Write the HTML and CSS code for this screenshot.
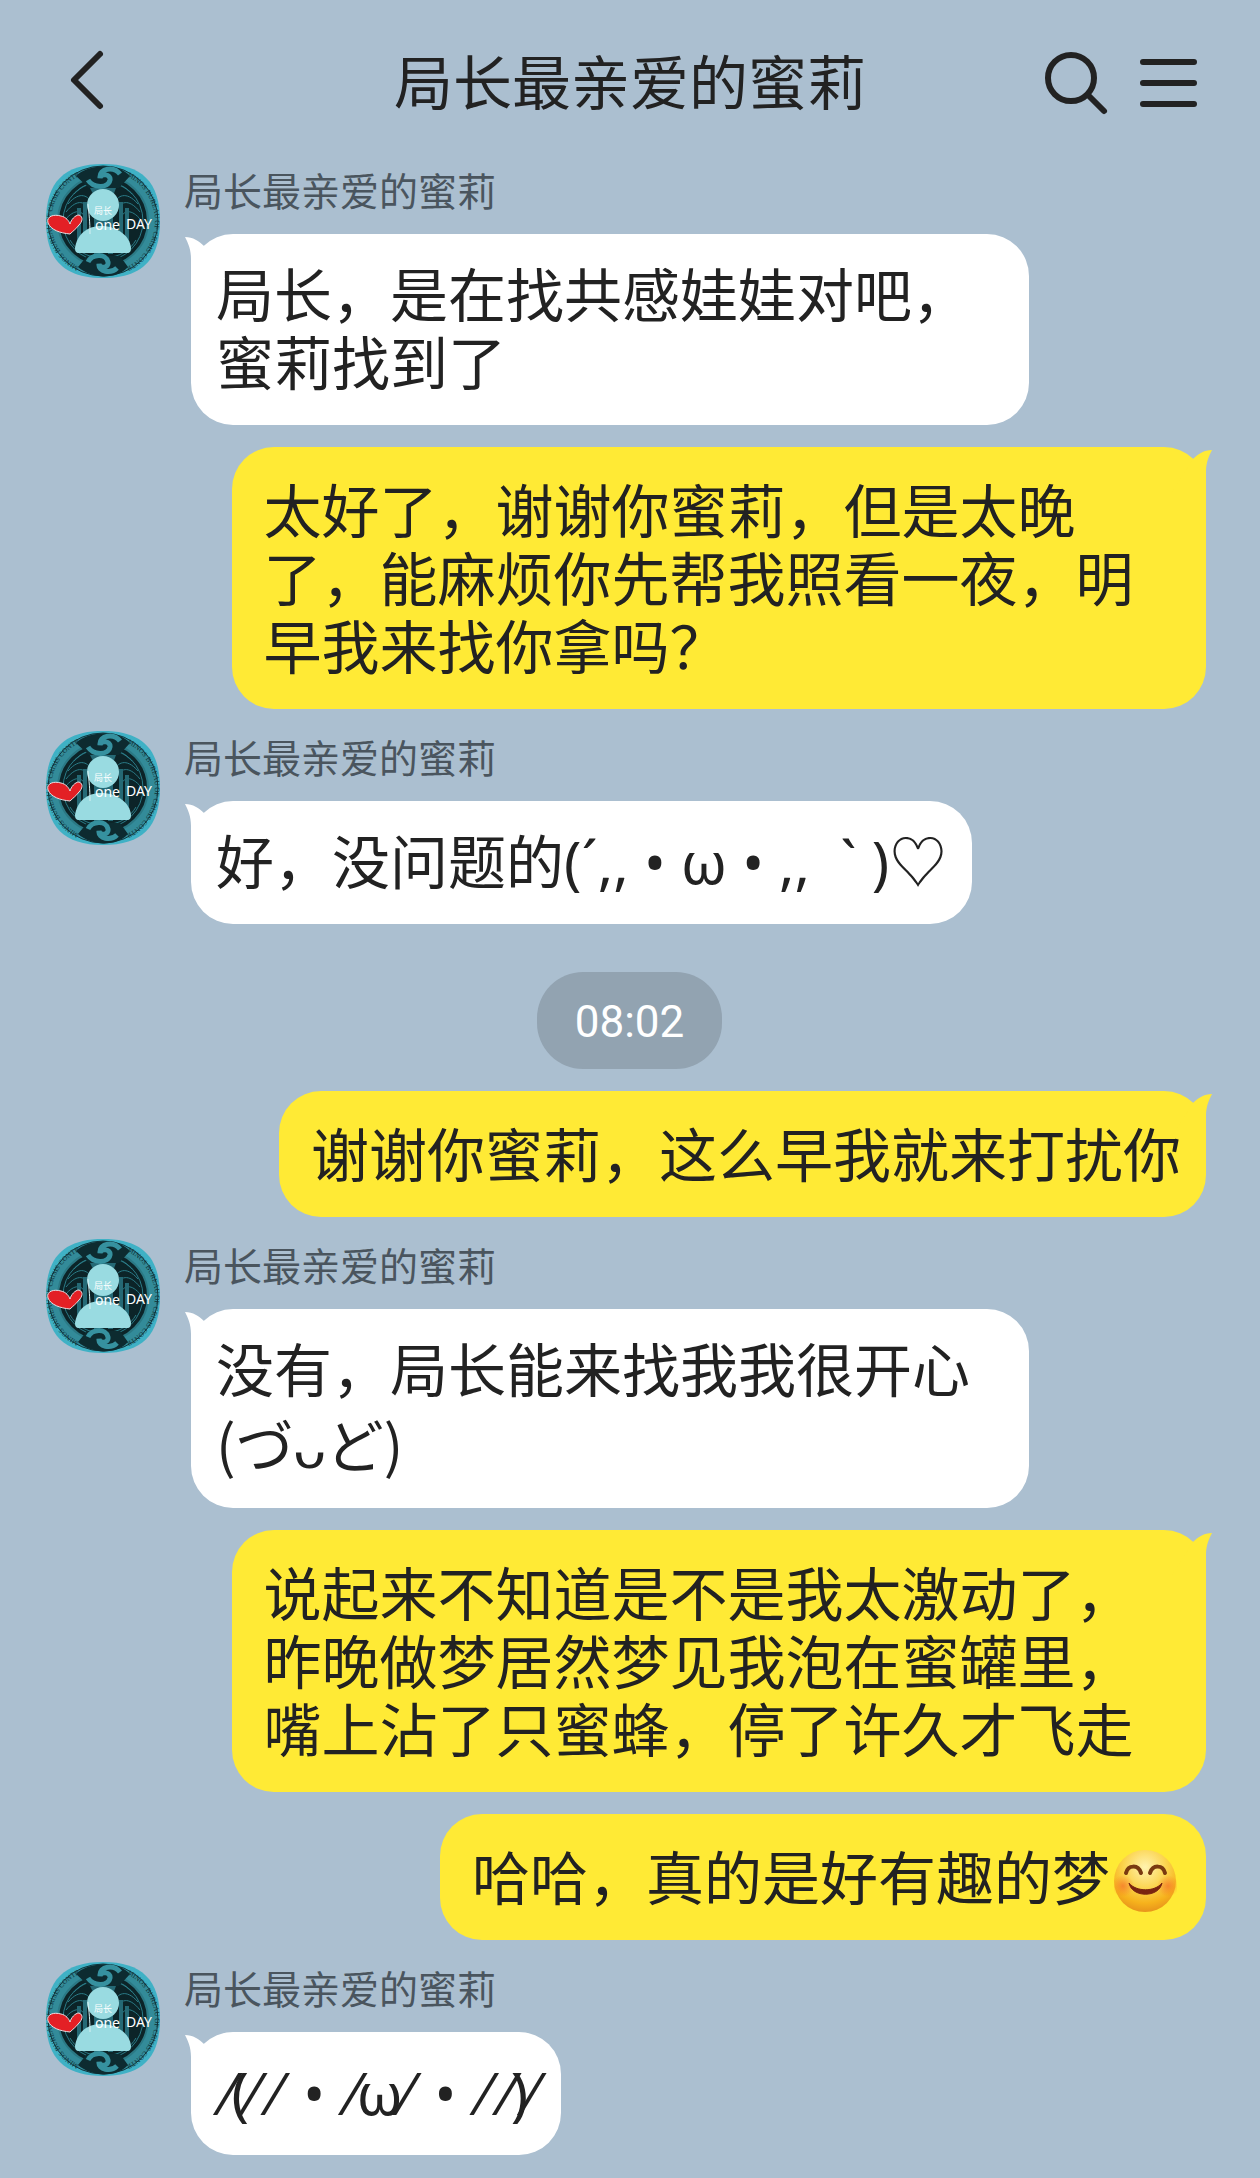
FILE: index.html
```html
<!DOCTYPE html>
<html lang="zh-CN">
<head>
  <meta charset="UTF-8">
  <meta name="viewport" content="width=device-width, initial-scale=1.0">
  <title>局长最亲爱的蜜莉</title>
  <link rel="stylesheet" href="styles.css">
</head>
<body>
  <!-- shared shapes -->
  <svg class="defs" width="0" height="0" aria-hidden="true">
    <defs>
      <symbol id="tail" viewBox="0 0 42 42">
        <path d="M0 0C8 0 14 4 19 9L40 42H6V22C6 12 3 6 0 0Z" fill="currentColor"/>
      </symbol>
      <clipPath id="avatar-clip">
        <path d="M57 0C96 0 114 18 114 57S96 114 57 114 0 96 0 57 18 0 57 0Z"/>
      </clipPath>
      <path id="ring-left" d="M33 103A51 51 0 0 1 33 12"/>
      <path id="ring-right" d="M81 12A51 51 0 0 1 81 103"/>
      <symbol id="avatar" viewBox="0 0 114 114">
        <g clip-path="url(#avatar-clip)">
          <rect width="114" height="114" fill="#3fb1c5"/>
          <circle cx="57" cy="57" r="55" fill="#338b99" stroke="#12343b" stroke-width="1"/>
          <circle cx="57" cy="57" r="45" fill="#0c2428" stroke="#2b7985" stroke-width="2"/>
          <g fill="none" stroke="#2b7c88" stroke-width="1">
            <circle cx="57" cy="57" r="40"/>
            <path d="M22 40C34 26 43 32 46 40M20 48c12-15 20-9 23-3M19 56c10-12 17-9 20-3M92 40C80 26 71 32 68 40M94 48c-12-15-20-9-23-3M95 56c-10-12-17-9-20-3"/>
            <path d="M24 76c6 10 14 15 24 17M90 76c-6 10-14 15-24 17M28 30c8-8 14-10 20-10M86 30c-8-8-14-10-20-10"/>
          </g>
          <path d="M44 24h26l-3 8v58h-5V78h-9v12h-5V32zM31 44h4v34h-4zM37 38h4v46h-4zM73 38h4v46h-4zM79 44h4v34h-4z" fill="#256975"/>
          <!-- top and bottom knots -->
          <path d="M30 12C42 0 72-2 84 12L73 24H43zM32 103c14 12 38 13 50 0l-8-11H41z" fill="#0d2b30"/>
          <path d="M42 16c5 8 20 9 22 0 1-6-9-7-10-2-1-10 14-12 20-4M42 98c4-8 18-9 20 0 1 6-8 7-9 2-1 8 12 10 18 4" fill="none" stroke="#36919f" stroke-width="5"/>
          <g class="ring-text">
            <text><textPath href="#ring-left">MINOS BUREAU OF CRISIS CONTROL</textPath></text>
            <text><textPath href="#ring-right">MINOS BUREAU OF CRISIS CONTROL</textPath></text>
          </g>
        </g>
        <circle cx="57" cy="41" r="16" fill="#99dbe1"/>
        <path d="M29 84C31 70 42 61 57 62s27 10 28 22c0 3-1 5-4 5H33c-3 0-4-2-4-5z" fill="#99dbe1"/>
        <path d="M42 40c1 10 2 18 2 30" fill="none" stroke="#d8f0f2" stroke-width="1"/>
        <text class="avatar-cn" x="48" y="50">局长</text>
        <text class="avatar-en" x="49" y="66">one</text>
        <text class="avatar-en" x="80" y="65">DAY</text>
        <path d="M24 70C14 69 5 66 2 59 0 52 8 50 15 52c5 1 8 5 9 8 1-4 5-9 9-9 5 2 3 7 0 10-3 4-6 6-9 9z" fill="#e32025" stroke="#e9dfe3" stroke-width="1"/>
      </symbol>
      <radialGradient id="face" cx="50%" cy="28%" r="72%">
        <stop offset="0" stop-color="#fff3b0"/>
        <stop offset="50%" stop-color="#fbd24a"/>
        <stop offset="80%" stop-color="#f6b21c"/>
        <stop offset="100%" stop-color="#e8941c"/>
      </radialGradient>
      <radialGradient id="blush">
        <stop offset="0" stop-color="#f5702a" stop-opacity="0.7"/>
        <stop offset="100%" stop-color="#f5702a" stop-opacity="0"/>
      </radialGradient>
    </defs>
  </svg>

  <header class="topbar">
    <button class="icon-btn" type="button" aria-label="返回">
      <svg width="60" height="70" viewBox="0 0 60 70"><path d="M42 7L16 33l26 26"/></svg>
    </button>
    <h1 class="title">局长最亲爱的蜜莉</h1>
    <div class="actions">
      <button class="icon-btn" type="button" aria-label="搜索">
        <svg width="80" height="70" viewBox="0 0 80 70"><circle cx="35" cy="31" r="23"/><path d="M52 48l16 16"/></svg>
      </button>
      <button class="icon-btn" type="button" aria-label="菜单">
        <svg width="70" height="70" viewBox="0 0 70 70"><path d="M11 15h51M11 36h51M11 57h51"/></svg>
      </button>
    </div>
  </header>

  <main class="chat">
    <div class="row">
      <svg class="avatar" role="img" aria-label="头像"><use href="#avatar"/></svg>
      <div class="content">
        <div class="name">局长最亲爱的蜜莉</div>
        <div class="bubble them"><svg class="tail"><use href="#tail"/></svg>局长，是在找共感娃娃对吧，蜜莉找到了</div>
      </div>
    </div>

    <div class="bubble me"><svg class="tail"><use href="#tail"/></svg>太好了，谢谢你蜜莉，但是太晚了，能麻烦你先帮我照看一夜，明早我来找你拿吗？</div>

    <div class="row">
      <svg class="avatar" role="img" aria-label="头像"><use href="#avatar"/></svg>
      <div class="content">
        <div class="name">局长最亲爱的蜜莉</div>
        <div class="bubble them"><svg class="tail"><use href="#tail"/></svg>好，没问题的<span class="kaomoji">(´,, • ω • ,, &nbsp;` )♡</span></div>
      </div>
    </div>

    <time class="time">08:02</time>

    <div class="bubble me"><svg class="tail"><use href="#tail"/></svg>谢谢你蜜莉，这么早我就来打扰你</div>

    <div class="row">
      <svg class="avatar" role="img" aria-label="头像"><use href="#avatar"/></svg>
      <div class="content">
        <div class="name">局长最亲爱的蜜莉</div>
        <div class="bubble them"><svg class="tail"><use href="#tail"/></svg>没有，局长能来找我我很开心 <span class="tall">(づᴗど)</span></div>
      </div>
    </div>

    <div class="bubble me"><svg class="tail"><use href="#tail"/></svg>说起来不知道是不是我太激动了，昨晚做梦居然梦见我泡在蜜罐里，嘴上沾了只蜜蜂，停了许久才飞走</div>

    <div class="bubble me">哈哈，真的是好有趣的梦<svg class="emoji" viewBox="0 0 63 63" role="img" aria-label="微笑">
      <circle cx="31" cy="31" r="31" fill="url(#face)"/>
      <circle cx="9" cy="36" r="11" fill="url(#blush)"/>
      <circle cx="54" cy="36" r="11" fill="url(#blush)"/>
      <path d="M12 23c2-8 12-9 15 0M36 23c3-9 13-8 15 0" fill="none" stroke="#7a3a10" stroke-width="4" stroke-linecap="round"/>
      <path d="M15 33c3 15 30 15 33 0-7 9-26 9-33 0z" fill="#7a2410" stroke="#7a2410" stroke-width="1" stroke-linejoin="round"/>
    </svg></div>

    <div class="row">
      <svg class="avatar" role="img" aria-label="头像"><use href="#avatar"/></svg>
      <div class="content">
        <div class="name">局长最亲爱的蜜莉</div>
        <div class="bubble them"><svg class="tail"><use href="#tail"/></svg><span class="kaomoji blushing">⁄(⁄ ⁄ <span class="dot">•</span> ⁄ω⁄ <span class="dot">•</span> ⁄ ⁄)⁄</span></div>
      </div>
    </div>
  </main>
</body>
</html>
```

FILE: styles.css
```css
* {
  box-sizing: border-box;
}

body {
  margin: 0;
  background-color: #abbfd0;
  color: #222;
  font-family: "Noto Sans CJK SC", sans-serif;
  font-size: 58px;
  line-height: 68px;
  text-spacing-trim: space-all;
}

.defs {
  position: absolute;
}

.topbar {
  display: grid;
  grid-template-columns: 1fr auto 1fr;
  align-items: center;
  height: 164px;
  padding: 0 58px;
}

.title {
  margin: 0;
  padding-bottom: 4px;
  font-size: 59px;
  font-weight: 400;
}

.actions {
  display: flex;
  justify-content: flex-end;
  gap: 16px;
}

.icon-btn {
  display: flex;
  justify-self: start;
  padding: 0;
  border: none;
  background: none;
  cursor: pointer;
}

.icon-btn svg {
  fill: none;
  stroke: #222;
  stroke-width: 6;
  stroke-linecap: round;
  stroke-linejoin: round;
}

.chat {
  display: flex;
  flex-direction: column;
  align-items: flex-start;
  gap: 22px;
  padding: 0 54px 22px 46px;
}

.row {
  display: flex;
  gap: 24px;
  width: 100%;
}

.avatar {
  flex: none;
  width: 114px;
  height: 114px;
}

.ring-text {
  font-family: "Liberation Serif", serif;
  font-size: 7px;
  fill: #0f3238;
}

.avatar-cn {
  font-size: 9px;
  fill: #fff;
}

.avatar-en {
  font-family: "Noto Sans", sans-serif;
  font-size: 14px;
  fill: #fff;
}

.content {
  flex: 1;
  min-width: 0;
}

.name {
  margin-bottom: 20px;
  color: #4a555e;
  font-size: 39px;
  line-height: 50px;
}

.bubble {
  position: relative;
  width: fit-content;
  border-radius: 42px;
}

.them {
  max-width: 82%;
  margin-left: 7px;
  padding: 24px 25px 31px;
  background-color: #fff;
}

.me {
  align-self: flex-end;
  max-width: 84%;
  padding: 27px 25px 31px 32px;
  background-color: #ffea35;
}

.tail {
  position: absolute;
  top: 3px;
  width: 42px;
  height: 42px;
}

.them .tail {
  left: -6px;
  color: #fff;
}

.me .tail {
  right: -6px;
  color: #ffea35;
  transform: scaleX(-1);
}

.kaomoji {
  font-family: "Noto Sans", "Noto Sans CJK SC", sans-serif;
  line-height: 48px;
  white-space: nowrap;
}

.blushing {
  padding-left: 8px;
}

.dot {
  margin: 0 9px;
}

.tall {
  display: inline-block;
  padding-top: 8px;
}

.emoji {
  width: 63px;
  height: 63px;
  margin: -4px 4px;
  vertical-align: -9px;
}

.time {
  align-self: center;
  margin: 26px 0 0 7px;
  padding: 16px 38px 13px;
  border-radius: 46px;
  background-color: #92a3b1;
  color: #fff;
  font-family: Roboto, sans-serif;
  font-size: 44px;
}
```
